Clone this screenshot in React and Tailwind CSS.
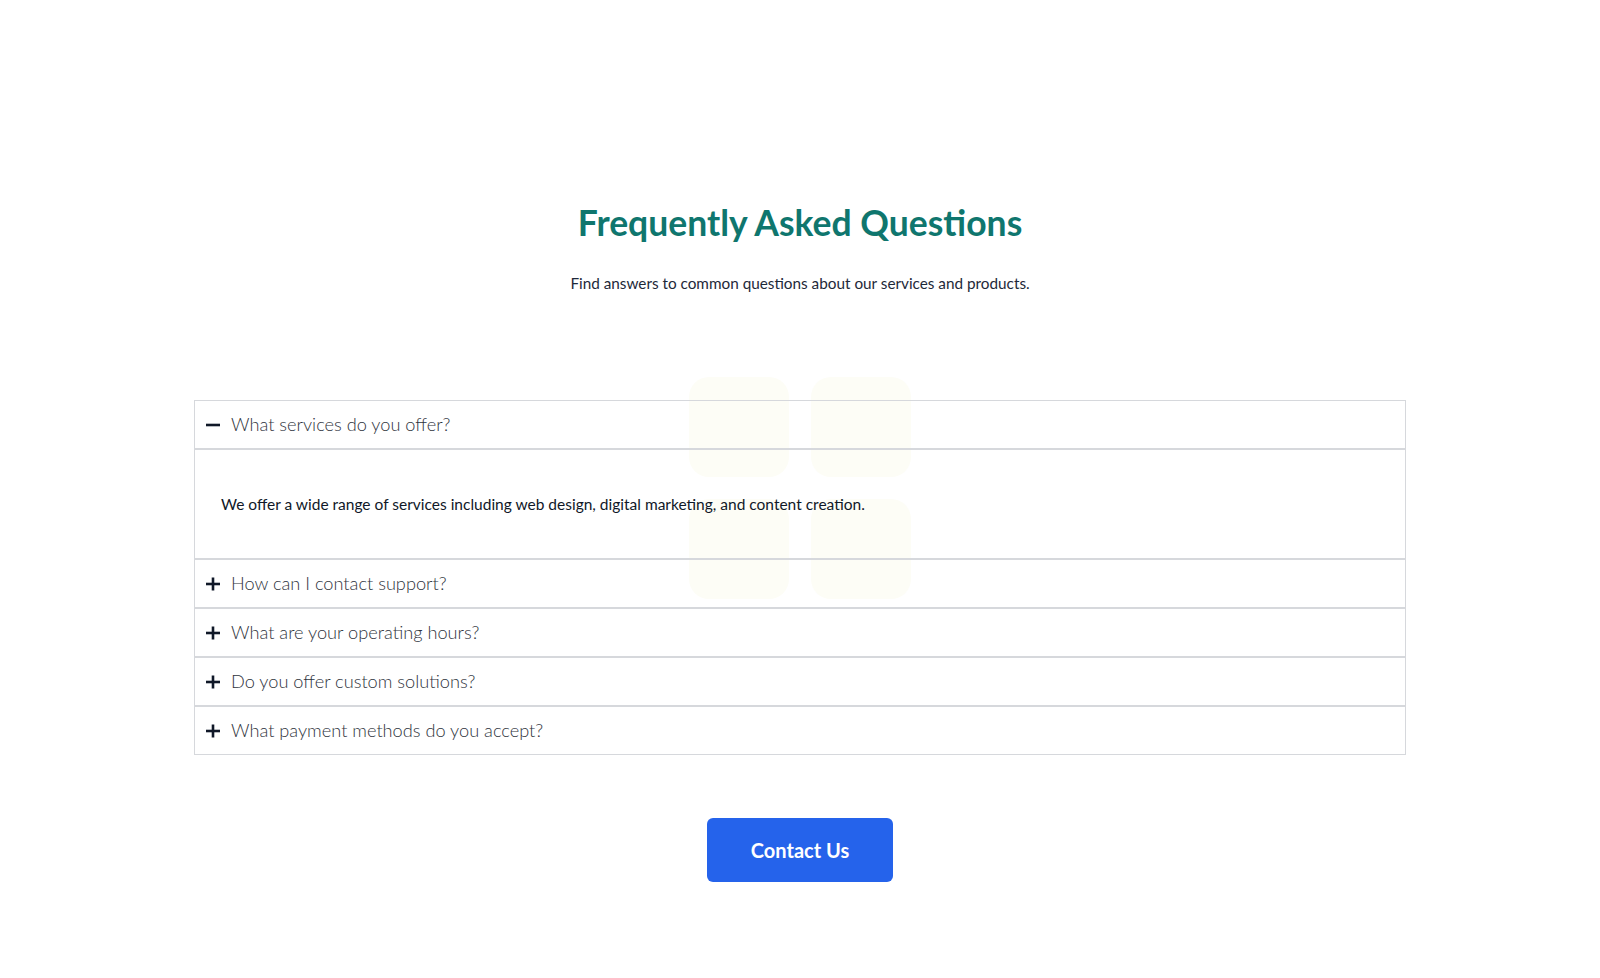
import { useState } from "react";

const faqs = [
  {
    q: "What services do you offer?",
    a: "We offer a wide range of services including web design, digital marketing, and content creation.",
  },
  {
    q: "How can I contact support?",
    a: "You can reach our support team by email or phone, Monday through Friday.",
  },
  {
    q: "What are your operating hours?",
    a: "We are open from 9am to 6pm, Monday to Friday.",
  },
  {
    q: "Do you offer custom solutions?",
    a: "Yes, we tailor our services to fit the needs of each client.",
  },
  {
    q: "What payment methods do you accept?",
    a: "We accept all major credit cards, bank transfers and PayPal.",
  },
];

function Sign({ open }) {
  return (
    <svg width="16" height="16" viewBox="0 0 16 16" className="shrink-0 text-gray-900">
      <line x1="1" y1="8" x2="15" y2="8" stroke="currentColor" strokeWidth="2.6" />
      {!open && <line x1="8" y1="1.5" x2="8" y2="14.5" stroke="currentColor" strokeWidth="2.6" />}
    </svg>
  );
}

export default function App() {
  const [openIdx, setOpenIdx] = useState(0);

  return (
    <main
      className="min-h-screen bg-white"
      style={{ fontFamily: "Lato, 'Noto Sans', sans-serif" }}
    >
      <div className="mx-auto max-w-7xl px-[34px] pt-[199px] pb-24">
        <h1 className="text-center text-[35.5px] font-bold leading-[48px] text-[#0f766e]">
          Frequently Asked Questions
        </h1>
        <p className="mt-[24px] text-center text-[15.3px] leading-6 text-gray-800">
          Find answers to common questions about our services and products.
        </p>

        <div className="relative mt-[105px]">
          {/* faint decorative tiles behind the list */}
          <div className="pointer-events-none absolute left-1/2 top-[-23px] grid -translate-x-1/2 grid-cols-2 gap-[22px]">
            <div className="h-[100px] w-[100px] rounded-[20px] bg-[#fdfdf6]" />
            <div className="h-[100px] w-[100px] rounded-[20px] bg-[#fdfdf6]" />
            <div className="h-[100px] w-[100px] rounded-[20px] bg-[#fdfdf6]" />
            <div className="h-[100px] w-[100px] rounded-[20px] bg-[#fdfdf6]" />
          </div>

          <div className="relative">
            {faqs.map((f, i) => (
              <div key={f.q}>
                <button
                  type="button"
                  onClick={() => setOpenIdx(openIdx === i ? -1 : i)}
                  className="flex h-[49px] w-full items-center gap-2.5 border border-[#d6d8dc] px-2.5 text-left"
                >
                  <Sign open={openIdx === i} />
                  <span className="text-[18.2px] font-light text-[#2f343d]">{f.q}</span>
                </button>
                {openIdx === i && (
                  <div className="border border-[#d6d8dc] px-[26px] py-[42px]">
                    <p className="text-[15.5px] font-normal leading-6 text-gray-900">{f.a}</p>
                  </div>
                )}
              </div>
            ))}
          </div>
        </div>

        <div className="mt-[63px] flex justify-center">
          <button
            type="button"
            className="h-16 w-[186px] rounded-md bg-[#2563eb] text-[20px] font-bold text-white"
          >
            Contact Us
          </button>
        </div>
      </div>
    </main>
  );
}
